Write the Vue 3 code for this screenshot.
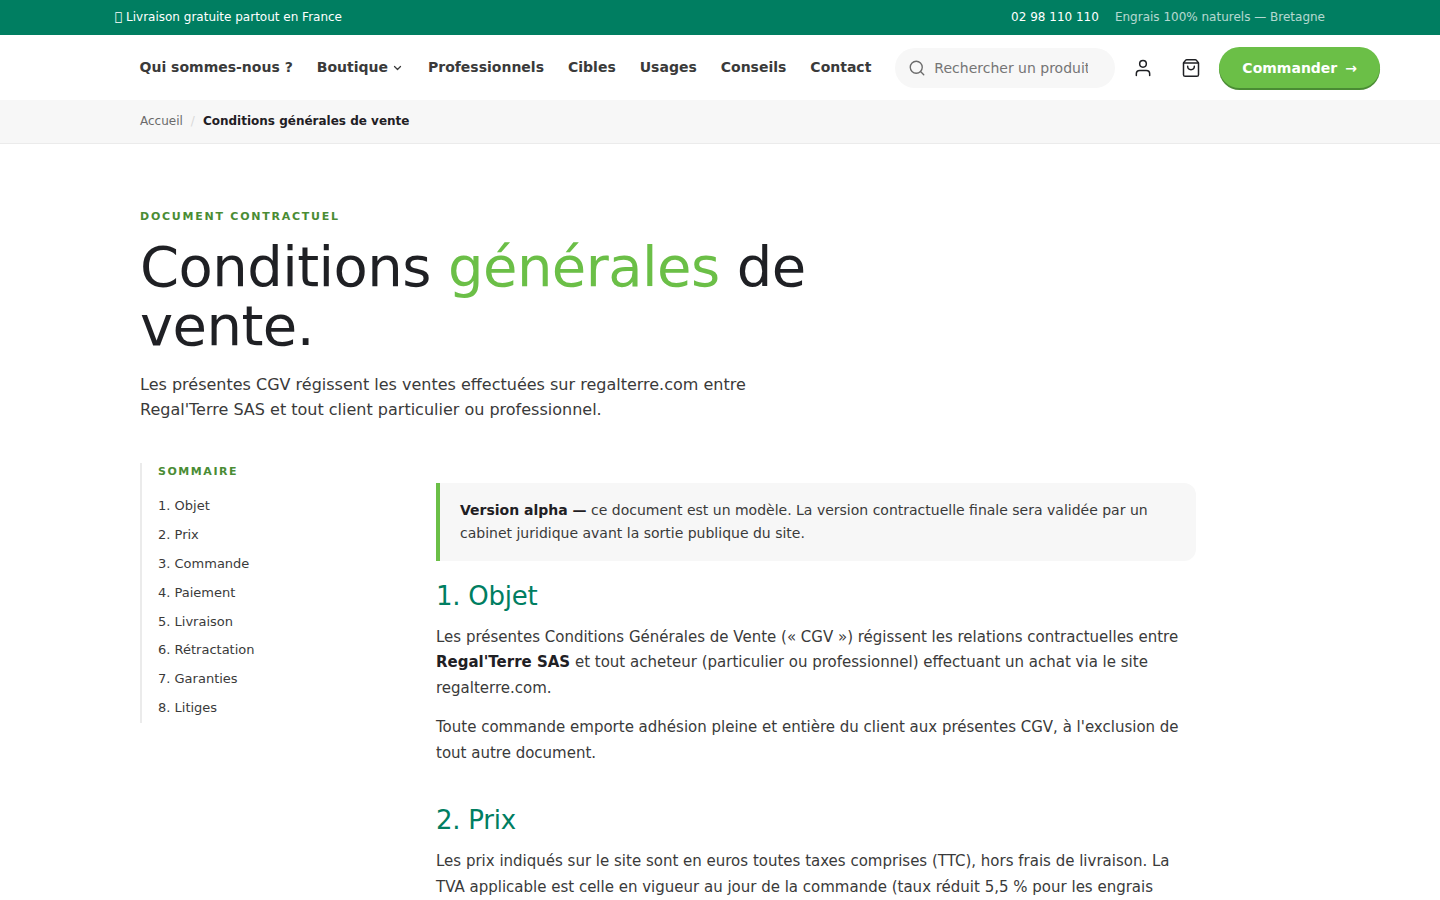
<script setup>
import { ref } from 'vue';

const search = ref('');

const navLinks = [
  { label: 'Qui sommes-nous ?', href: '#qui-sommes-nous' },
  { label: 'Boutique', href: '#boutique', hasMenu: true },
  { label: 'Professionnels', href: '#professionnels' },
  { label: 'Cibles', href: '#cibles' },
  { label: 'Usages', href: '#usages' },
  { label: 'Conseils', href: '#conseils' },
  { label: 'Contact', href: '#contact' }
];

const sommaire = [
  { id: 'objet', label: '1. Objet' },
  { id: 'prix', label: '2. Prix' },
  { id: 'commande', label: '3. Commande' },
  { id: 'paiement', label: '4. Paiement' },
  { id: 'livraison', label: '5. Livraison' },
  { id: 'retractation', label: '6. Rétractation' },
  { id: 'garanties', label: '7. Garanties' },
  { id: 'litiges', label: '8. Litiges' }
];
</script>

<template>
  <div class="page">
    <div class="topbar">
      <div class="topbar-inner">
        <span>&#xF0D1; Livraison gratuite partout en France</span>
        <div class="topbar-right">
          <a href="tel:0298110110">02 98 110 110</a>
          <span class="topbar-muted">Engrais 100% naturels — Bretagne</span>
        </div>
      </div>
    </div>

    <header class="header">
      <nav class="nav" aria-label="Navigation principale">
        <a v-for="link in navLinks" :key="link.label" :href="link.href" class="nav-link">
          {{ link.label }}
          <svg v-if="link.hasMenu" class="chevron" viewBox="0 0 24 24" aria-hidden="true">
            <path d="m5 9 6 6 6-6" />
          </svg>
        </a>
      </nav>

      <form class="search" role="search" @submit.prevent>
        <svg class="search-icon" viewBox="0 0 24 24" aria-hidden="true">
          <circle cx="11" cy="11" r="8" />
          <path d="m21 21-4.3-4.3" />
        </svg>
        <input
          v-model="search"
          type="search"
          class="search-input"
          placeholder="Rechercher un produit"
          aria-label="Rechercher un produit"
        >
      </form>

      <div class="actions">
        <button type="button" class="icon-button" aria-label="Mon compte">
          <svg viewBox="0 0 24 24" aria-hidden="true">
            <path d="M20 21v-2a4 4 0 0 0-4-4H8a4 4 0 0 0-4 4v2" />
            <circle cx="12" cy="7" r="4" />
          </svg>
        </button>
        <button type="button" class="icon-button" aria-label="Panier">
          <svg viewBox="0 0 24 24" aria-hidden="true">
            <path d="M16 10a4 4 0 0 1-8 0" />
            <path d="M3.1 6h17.8" />
            <path d="M3.4 5.467a2 2 0 0 0-.4 1.2V20a2 2 0 0 0 2 2h14a2 2 0 0 0 2-2V6.667a2 2 0 0 0-.4-1.2l-2-2.667A2 2 0 0 0 17 2H7a2 2 0 0 0-1.6.8z" />
          </svg>
        </button>
        <button type="button" class="order-button">
          <span>Commander</span>
          <span aria-hidden="true">→</span>
        </button>
      </div>
    </header>

    <nav class="breadcrumb" aria-label="Fil d'Ariane">
      <div class="container breadcrumb-inner">
        <a href="#accueil">Accueil</a>
        <span class="separator">/</span>
        <strong>Conditions générales de vente</strong>
      </div>
    </nav>

    <main class="container main">
      <div class="eyebrow">Document contractuel</div>
      <h1 class="title">Conditions <em>générales</em> de vente.</h1>
      <p class="lead">
        Les présentes CGV régissent les ventes effectuées sur regalterre.com entre
        Regal'Terre SAS et tout client particulier ou professionnel.
      </p>

      <div class="layout">
        <aside class="toc">
          <div class="toc-title">Sommaire</div>
          <ul>
            <li v-for="item in sommaire" :key="item.id">
              <a :href="`#${item.id}`">{{ item.label }}</a>
            </li>
          </ul>
        </aside>

        <article class="article">
          <div class="callout">
            <strong>Version alpha —</strong> ce document est un modèle. La version contractuelle
            finale sera validée par un cabinet juridique avant la sortie publique du site.
          </div>

          <section id="objet">
            <h2>1. Objet</h2>
            <p>
              Les présentes Conditions Générales de Vente (« CGV ») régissent les relations
              contractuelles entre <strong>Regal'Terre SAS</strong> et tout acheteur (particulier
              ou professionnel) effectuant un achat via le site regalterre.com.
            </p>
            <p>
              Toute commande emporte adhésion pleine et entière du client aux présentes CGV, à
              l'exclusion de tout autre document.
            </p>
          </section>

          <section id="prix">
            <h2>2. Prix</h2>
            <p>
              Les prix indiqués sur le site sont en euros toutes taxes comprises (TTC), hors frais
              de livraison. La TVA applicable est celle en vigueur au jour de la commande (taux
              réduit 5,5 % pour les engrais
            </p>
          </section>
        </article>
      </div>
    </main>
  </div>
</template>

<style scoped>
.page {
  color: #3a3a3a;
  font-size: 16px;
  line-height: 1.6;
}

a {
  color: inherit;
  text-decoration: none;
}

a:hover {
  color: #007e61;
}

.container {
  max-width: 1160px;
  margin: 0 auto;
  padding: 0 40px;
}

/* Bandeau */
.topbar {
  background: #007e61;
  color: #fff;
  font-size: 12px;
  padding: 8px 40px;
}

.topbar-inner {
  display: flex;
  justify-content: space-between;
  max-width: 1210px;
  margin: 0 auto;
}

.topbar-right {
  display: flex;
  gap: 16px;
}

.topbar a:hover {
  color: #fff;
}

.topbar-muted {
  opacity: 0.7;
}

/* En-tête */
.header {
  display: flex;
  align-items: center;
  justify-content: flex-end;
  gap: 24px;
  padding: 12px 60px;
  background: #fff;
}

.nav {
  display: flex;
  gap: 24px;
}

.nav-link {
  display: flex;
  align-items: center;
  gap: 4px;
  font-size: 14px;
  font-weight: 600;
  white-space: nowrap;
}

.chevron {
  width: 12px;
  height: 12px;
  fill: none;
  stroke: currentColor;
  stroke-width: 2.5;
  stroke-linecap: round;
  stroke-linejoin: round;
}

.search {
  display: flex;
  align-items: center;
  gap: 8px;
  width: 220px;
  height: 40px;
  padding: 0 13px;
  border-radius: 20px;
  background: #f7f7f7;
  box-sizing: border-box;
}

.search-icon {
  width: 18px;
  height: 18px;
  flex-shrink: 0;
  fill: none;
  stroke: #6b6b6b;
  stroke-width: 1.8;
  stroke-linecap: round;
  stroke-linejoin: round;
}

.search-input {
  flex: 1;
  min-width: 0;
  border: none;
  outline: none;
  padding: 0;
  background: transparent;
  color: #3a3a3a;
  font-family: inherit;
  font-size: 14px;
}

.actions {
  display: flex;
  align-items: center;
  gap: 8px;
  margin-left: -16px;
}

.icon-button {
  display: flex;
  align-items: center;
  justify-content: center;
  width: 40px;
  height: 40px;
  padding: 0;
  border: none;
  border-radius: 50%;
  background: transparent;
  color: #1f2024;
  cursor: pointer;
}

.icon-button:hover {
  background: #f7f7f7;
}

.icon-button svg {
  width: 20px;
  height: 20px;
  fill: none;
  stroke: currentColor;
  stroke-width: 1.8;
  stroke-linecap: round;
  stroke-linejoin: round;
}

.order-button {
  display: flex;
  align-items: center;
  gap: 8px;
  padding: 10px 23px 8px;
  border: none;
  border-radius: 24px;
  background: #6bbf47;
  box-shadow: 0 2px 0 #4a8c34;
  color: #fff;
  font-family: inherit;
  font-size: 14px;
  font-weight: 700;
  line-height: 23px;
  cursor: pointer;
}

.order-button:hover {
  background: #5fb03d;
}

/* Fil d'Ariane */
.breadcrumb {
  background: #f7f7f7;
  border-bottom: 1px solid #ebebeb;
  font-size: 12px;
}

.breadcrumb-inner {
  display: flex;
  gap: 8px;
  padding-top: 12px;
  padding-bottom: 12px;
  color: #6b6b6b;
}

.separator {
  color: #d9d9d9;
}

.breadcrumb strong {
  color: #1f2024;
  font-weight: 600;
}

/* Contenu */
.main {
  padding-top: 64px;
  padding-bottom: 64px;
}

.eyebrow,
.toc-title {
  color: #4a8c34;
  font-size: 11px;
  font-weight: 700;
  text-transform: uppercase;
}

.eyebrow {
  letter-spacing: 0.16em;
}

.toc-title {
  letter-spacing: 0.14em;
}

.title {
  max-width: 760px;
  margin: 12px 0 16px;
  color: #1f2024;
  font-size: 56px;
  font-weight: 400;
  line-height: 1.05;
  letter-spacing: -0.01em;
}

.title em {
  color: #6bbf47;
  font-style: normal;
}

.lead {
  max-width: 640px;
  margin: 0 0 40px;
}

.layout {
  display: grid;
  grid-template-columns: 240px minmax(0, 760px);
  align-items: start;
  gap: 56px;
}

.toc {
  padding-left: 16px;
  border-left: 2px solid #ebebeb;
}

.toc ul {
  list-style: none;
  margin: 12px 0 0;
  padding: 0;
  font-size: 13px;
}

.toc a {
  display: block;
  padding: 4px 0;
}

.article {
  padding-top: 20px;
  font-size: 15px;
  line-height: 1.7;
}

.article strong {
  color: #1f2024;
}

.callout {
  margin-bottom: 21px;
  padding: 16px 20px;
  border-left: 4px solid #6bbf47;
  border-radius: 0 12px 12px 0;
  background: #f7f7f7;
  font-size: 14px;
  line-height: 1.65;
}

.article section + section {
  margin-top: 40px;
}

.article h2 {
  margin: 0 0 13px;
  color: #007e61;
  font-size: 26px;
  font-weight: 400;
  line-height: 1.15;
  letter-spacing: -0.01em;
}

.article p {
  margin: 0 0 14px;
}

.article p:last-child {
  margin-bottom: 0;
}
</style>

<style>
body {
  margin: 0;
  background: #fff;
  font-family: "DejaVu Sans", sans-serif;
}
</style>
